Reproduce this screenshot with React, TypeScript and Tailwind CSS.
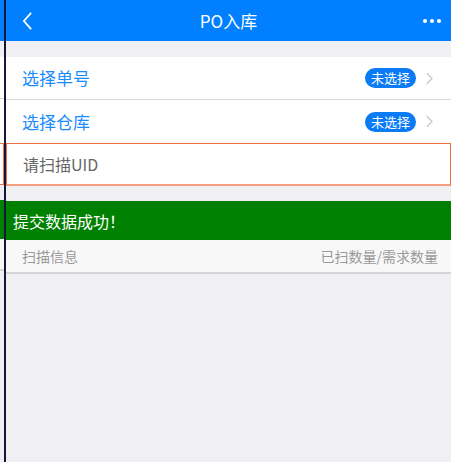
import React from 'react';

const font = { fontFamily: '"Noto Sans CJK SC", "Noto Sans", sans-serif' };

const Chevron: React.FC = () => (
  <svg viewBox="0 0 8 14" className="w-[7px] h-[13px]" fill="none" stroke="#c7c7cc" strokeWidth="1.5">
    <path d="M1 1l6 6-6 6" />
  </svg>
);

const SelectRow: React.FC<{ label: string; last?: boolean }> = ({ label, last }) => (
  <div className={`h-[43px] flex items-center justify-between pl-4 pr-[18px] bg-white ${last ? '' : 'border-b border-[#d9d9d9]'}`}>
    <span className="text-[17px] text-[#1a8cff]">{label}</span>
    <div className="flex items-center gap-[10px]">
      <span className="h-[20px] px-[6px] rounded-full bg-[#0a7bf5] text-white text-[13px] leading-[20px]">未选择</span>
      <Chevron />
    </div>
  </div>
);

const App: React.FC = () => {
  return (
    <div className="w-[451px] h-[462px] flex bg-[#efeff4] overflow-hidden" style={font}>
      {/* sliver of the neighbouring screen */}
      <div className="w-[4px] flex flex-col">
        <div className="h-[41px] bg-[#0080ff]" />
        <div className="h-[16px] bg-[#efeff4]" />
        <div className="h-[42px] bg-white border-b border-[#d9d9d9]" />
        <div className="h-[44px] bg-white" />
        <div className="h-[42px] bg-white border-y border-r border-[#f07040]" />
        <div className="h-[15px] bg-[#efeff4]" />
        <div className="h-[39px] bg-[#008000]" />
        <div className="h-[32px] bg-[#f8f8f8] border-b-2 border-[#d5d5d5]" />
        <div className="flex-1 bg-[#efeff4]" />
      </div>
      <div className="w-[2px] bg-[#14163a]" />

      <div className="flex-1 flex flex-col">
        {/* header */}
        <div className="h-[41px] bg-[#0080ff] grid grid-cols-[60px_1fr_60px] items-center text-white">
          <div className="pl-[16px]">
            <svg viewBox="0 0 12 20" className="w-[11px] h-[18px] block" fill="none" stroke="white" strokeWidth="2">
              <path d="M10 1L2 10l8 9" />
            </svg>
          </div>
          <span className="text-[17px] text-center">PO入库</span>
          <div className="flex items-center justify-end gap-[3px] pr-[10px]">
            <span className="w-[4px] h-[4px] rounded-full bg-white" />
            <span className="w-[4px] h-[4px] rounded-full bg-white" />
            <span className="w-[4px] h-[4px] rounded-full bg-white" />
          </div>
        </div>

        <div className="h-[16px]" />

        <SelectRow label="选择单号" />
        <SelectRow label="选择仓库" last />

        <div className="h-[43px] bg-white border border-[#f07040] border-b-[#f4a080] border-b-2 flex items-center pl-4">
          <span className="text-[16px] text-[#666666]">请扫描UID</span>
        </div>

        <div className="h-[15px]" />

        <div className="h-[39px] bg-[#008000] flex items-center pl-[7px]">
          <span className="text-[16px] text-white">提交数据成功！</span>
        </div>

        <div className="h-[34px] bg-[#f8f8f8] border-b-2 border-[#d5d5d5] flex items-center justify-between pl-4 pr-[13px]">
          <span className="text-[14px] text-[#999999]">扫描信息</span>
          <span className="text-[14px] text-[#999999]">已扫数量/需求数量</span>
        </div>
      </div>
    </div>
  );
};

export default App;
